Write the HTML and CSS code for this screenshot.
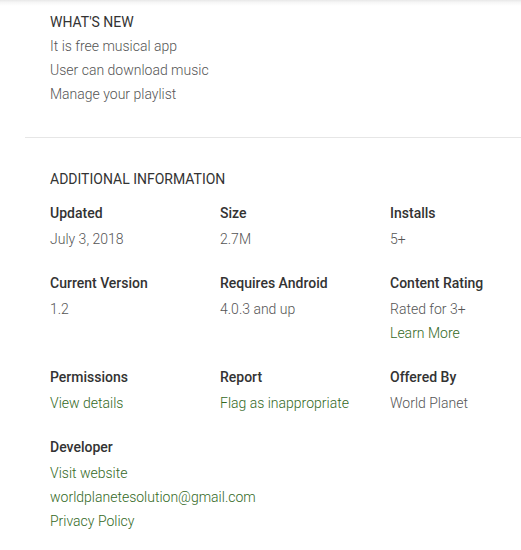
FILE: index.html
```html
<!DOCTYPE html>
<html>
<head>
<meta charset="utf-8">
<link rel="stylesheet" href="styles.css">
</head>
<body>
<div class="shade"></div>
<div class="page">
  <section class="whats-new">
    <h2 class="heading">WHAT'S NEW</h2>
    <div class="text">It is free musical app</div>
    <div class="text">User can download music</div>
    <div class="text">Manage your playlist</div>
  </section>
  <div class="divider"></div>
  <section class="additional">
    <h2 class="heading">ADDITIONAL INFORMATION</h2>
    <div class="grid">
      <div class="meta">
        <div class="label">Updated</div>
        <div class="text">July 3, 2018</div>
      </div>
      <div class="meta">
        <div class="label">Size</div>
        <div class="text">2.7M</div>
      </div>
      <div class="meta">
        <div class="label">Installs</div>
        <div class="text">5+</div>
      </div>
      <div class="meta">
        <div class="label">Current Version</div>
        <div class="text">1.2</div>
      </div>
      <div class="meta">
        <div class="label">Requires Android</div>
        <div class="text">4.0.3 and up</div>
      </div>
      <div class="meta">
        <div class="label">Content Rating</div>
        <div class="text">Rated for 3+</div>
        <a class="link" href="#">Learn More</a>
      </div>
      <div class="meta">
        <div class="label">Permissions</div>
        <a class="link" href="#">View details</a>
      </div>
      <div class="meta">
        <div class="label">Report</div>
        <a class="link" href="#">Flag as inappropriate</a>
      </div>
      <div class="meta">
        <div class="label">Offered By</div>
        <div class="text">World Planet</div>
      </div>
      <div class="meta">
        <div class="label">Developer</div>
        <a class="link" href="#">Visit website</a>
        <a class="link" href="#">worldplanetesolution@gmail.com</a>
        <a class="link" href="#">Privacy Policy</a>
      </div>
    </div>
  </section>
</div>
</body>
</html>
```
FILE: styles.css
```css
html, body {
  margin: 0;
  padding: 0;
  background: #fff;
}
body {
  font-family: Roboto, "Liberation Sans", Arial, sans-serif;
  font-size: 14px;
  line-height: 24px;
  color: #616161;
  overflow: hidden;
}
.shade {
  height: 6px;
  background: linear-gradient(to bottom, #e8e8e8, #f6f6f6 40%, #ffffff);
}
.page {
  padding-left: 25px;
}
.heading {
  margin: 0;
  font-size: 14px;
  font-weight: 400;
  line-height: 24px;
  color: #333;
}
.whats-new {
  padding: 4px 0 31px 25px;
}
.divider {
  height: 1px;
  background: #e6e6e6;
}
.additional {
  padding: 29px 0 0 25px;
}
.additional .heading {
  margin-bottom: 10px;
}
.grid {
  display: grid;
  grid-template-columns: 170px 170px minmax(0, 1fr);
  row-gap: 20px;
}
.meta {
  display: flex;
  flex-direction: column;
  align-items: flex-start;
  min-width: 0;
}
.label {
  font-weight: 500;
  color: #333;
  margin-bottom: 2px;
  white-space: nowrap;
}
.text {
  font-weight: 300;
  color: #555;
  white-space: nowrap;
}
.link {
  font-weight: 300;
  color: #33691e;
  text-decoration: none;
  white-space: nowrap;
}
```
